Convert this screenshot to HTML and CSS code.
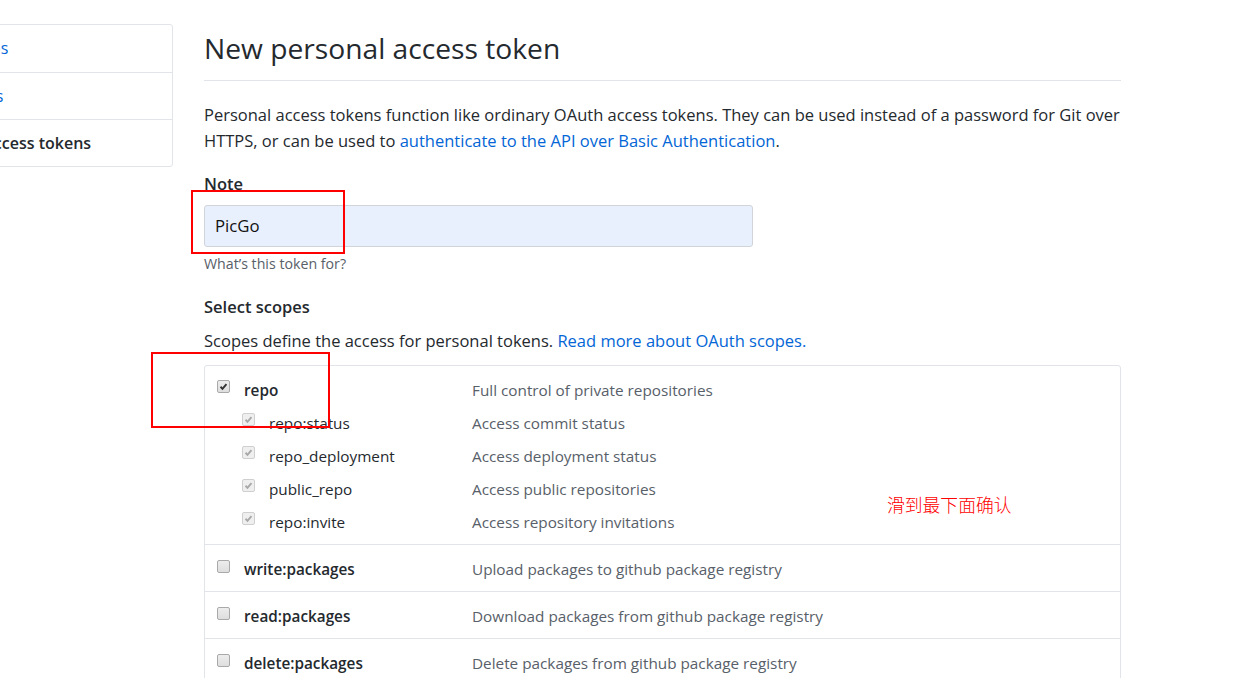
FILE: index.html
```html
<!DOCTYPE html>
<html lang="en">
<head>
<meta charset="utf-8">
<title>New personal access token</title>
<link rel="stylesheet" href="styles.css">
</head>
<body>
<div class="page">
  <nav class="menu">
    <a class="menu-item" href="#">GitHub Apps</a>
    <a class="menu-item" href="#">OAuth Apps</a>
    <a class="menu-item selected" href="#">Personal access tokens</a>
  </nav>
  <main class="main">
    <h2 class="subhead">New personal access token</h2>
    <p class="lead">Personal access tokens function like ordinary OAuth access tokens. They can be used instead of a password for Git over HTTPS, or can be used to <a href="#">authenticate to the API over Basic Authentication</a>.</p>

    <div class="form-group">
      <label class="label">Note</label>
      <div class="input">PicGo</div>
      <p class="note">What’s this token for?</p>
    </div>

    <h3 class="label scopes-title">Select scopes</h3>
    <p class="scopes-desc">Scopes define the access for personal tokens. <a href="#">Read more about OAuth scopes.</a></p>

    <div class="scopes">
      <div class="group first">
        <div class="row">
          <div class="name"><span class="cb checked"><svg viewBox="0 0 13 13"><path d="M3 6.8 L5.3 9.2 L10 3.6" /></svg></span><b>repo</b></div>
          <div class="desc">Full control of private repositories</div>
        </div>
        <div class="row sub">
          <div class="name"><span class="cb checked disabled"><svg viewBox="0 0 13 13"><path d="M3 6.8 L5.3 9.2 L10 3.6" /></svg></span><span>repo:status</span></div>
          <div class="desc">Access commit status</div>
        </div>
        <div class="row sub">
          <div class="name"><span class="cb checked disabled"><svg viewBox="0 0 13 13"><path d="M3 6.8 L5.3 9.2 L10 3.6" /></svg></span><span>repo_deployment</span></div>
          <div class="desc">Access deployment status</div>
        </div>
        <div class="row sub">
          <div class="name"><span class="cb checked disabled"><svg viewBox="0 0 13 13"><path d="M3 6.8 L5.3 9.2 L10 3.6" /></svg></span><span>public_repo</span></div>
          <div class="desc">Access public repositories</div>
        </div>
        <div class="row sub">
          <div class="name"><span class="cb checked disabled"><svg viewBox="0 0 13 13"><path d="M3 6.8 L5.3 9.2 L10 3.6" /></svg></span><span>repo:invite</span></div>
          <div class="desc">Access repository invitations</div>
        </div>
      </div>
      <div class="group">
        <div class="row">
          <div class="name"><span class="cb"></span><b>write:packages</b></div>
          <div class="desc">Upload packages to github package registry</div>
        </div>
      </div>
      <div class="group">
        <div class="row">
          <div class="name"><span class="cb"></span><b>read:packages</b></div>
          <div class="desc">Download packages from github package registry</div>
        </div>
      </div>
      <div class="group">
        <div class="row">
          <div class="name"><span class="cb"></span><b>delete:packages</b></div>
          <div class="desc">Delete packages from github package registry</div>
        </div>
      </div>
    </div>
  </main>
</div>

<div class="mark mark-note"></div>
<div class="mark mark-repo"></div>
<div class="annotation">滑到最下面确认</div>
</body>
</html>
```

FILE: styles.css
```css
html, body {
  margin: 0;
  padding: 0;
  background: #fff;
}
body {
  width: 1251px;
  height: 678px;
  overflow: hidden;
  position: relative;
  font-family: "Open Sans", "Noto Sans", "Liberation Sans", sans-serif;
  color: #24292e;
}
a {
  color: #0366d6;
  text-decoration: none;
}
.page {
  display: flex;
  align-items: flex-start;
  gap: 31px;
  margin-left: -104px;
  padding-top: 24px;
}
.menu {
  flex: 0 0 277px;
  width: 277px;
  display: flex;
  flex-direction: column;
  border: 1px solid #e1e4e8;
  border-radius: 3px;
  box-sizing: border-box;
}
.menu-item {
  display: block;
  padding: 0 15px 0 17px;
  height: 47px;
  line-height: 46px;
  font-size: 16px;
  border-bottom: 1px solid #e1e4e8;
  box-sizing: border-box;
}
.menu-item:first-child {
  height: 48px;
  line-height: 47px;
}
.menu-item:last-child {
  border-bottom: 0;
  height: 46px;
  line-height: 46px;
}
.menu-item.selected {
  color: #24292e;
  font-weight: 600;
  padding-left: 16px;
}
.main {
  width: 917px;
  flex: 0 0 917px;
}
.subhead {
  margin: 0;
  padding: 6px 0 14px;
  font-size: 28.2px;
  line-height: 36px;
  font-weight: 400;
  border-bottom: 1px solid #e1e4e8;
}
.lead {
  margin: 21px 0 0;
  font-size: 16.5px;
  line-height: 26px;
}
.form-group {
  margin-top: 19px;
}
.label {
  display: block;
  margin: 0;
  font-size: 16.5px;
  font-weight: 600;
  line-height: 22px;
}
.input {
  margin-top: 10px;
  width: 549px;
  height: 42px;
  box-sizing: border-box;
  background: #e8f0fe;
  border: 1px solid #d1d5da;
  border-radius: 3px;
  padding: 0 10px;
  line-height: 40px;
  font-size: 16.8px;
  color: #111;
}
.note {
  margin: 7px 0 0;
  font-size: 14.2px;
  line-height: 20px;
  color: #586069;
}
.scopes-title {
  margin-top: 22px;
}
.scopes-desc {
  margin: 11px 0 0;
  font-size: 16.5px;
  line-height: 24px;
}
.scopes {
  margin-top: 12px;
  border: 1px solid #e1e4e8;
  border-radius: 3px;
}
.group {
  padding: 9px 0 7px;
  border-top: 1px solid #e1e4e8;
}
.group.first {
  border-top: 0;
  padding: 7px 0 6px;
}
.row {
  display: flex;
  align-items: center;
  height: 30px;
  padding-left: 12px;
  font-size: 15.3px;
}
.group.first .row {
  height: 33px;
}
.name {
  flex: 0 0 255px;
  display: flex;
  align-items: center;
  gap: 14px;
  box-sizing: border-box;
}
.row.sub .name {
  padding-left: 25px;
}
.name b {
  font-weight: 600;
}
.desc {
  color: #586069;
}
.cb {
  flex: 0 0 13px;
  width: 13px;
  height: 13px;
  box-sizing: border-box;
  border: 1px solid #a9a9a9;
  border-radius: 2px;
  background: linear-gradient(#ededed, #dedede);
  position: relative;
  top: -3px;
  display: block;
}
.cb svg {
  display: block;
  width: 11px;
  height: 11px;
}
.cb svg path {
  fill: none;
  stroke: #333;
  stroke-width: 2.2;
}
.cb.disabled {
  border-color: #cfcfcf;
  background: #efefef;
}
.cb.disabled svg path {
  stroke: #a8a8a8;
}
.mark {
  position: absolute;
  border: 2px solid #ff0000;
  box-sizing: border-box;
}
.mark-note {
  left: 191px;
  top: 190px;
  width: 154px;
  height: 64px;
}
.mark-repo {
  left: 151px;
  top: 352px;
  width: 179px;
  height: 76px;
}
.annotation {
  position: absolute;
  left: 887px;
  top: 493px;
  font-family: "Noto Sans CJK SC", sans-serif;
  font-size: 17.8px;
  line-height: 22px;
  color: #ff0000;
  font-weight: 300;
}
```
